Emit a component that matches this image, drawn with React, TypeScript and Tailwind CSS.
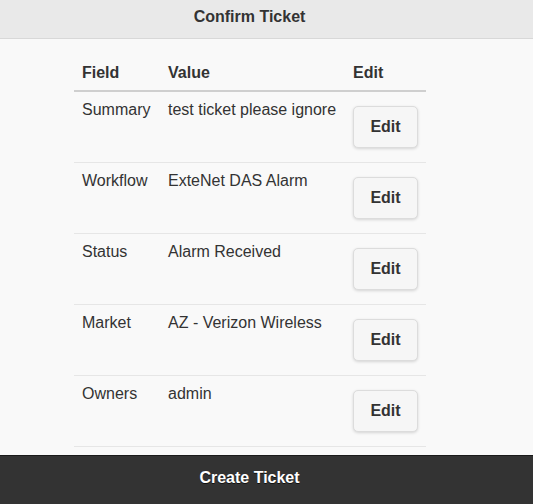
import React from "react";

const rows = [
  ["Summary", "test ticket please ignore"],
  ["Workflow", "ExteNet DAS Alarm"],
  ["Status", "Alarm Received"],
  ["Market", "AZ - Verizon Wireless"],
  ["Owners", "admin"],
];

export default function App() {
  return (
    <div className="w-[533px] h-[504px] bg-[#f9f9f9] text-[#333] text-[16px] flex flex-col overflow-hidden" style={{ fontFamily: '"Liberation Sans", Arial, sans-serif' }}>
      <div className="h-[39px] bg-[#e9e9e9] border-b border-[#d8d8d8] flex items-center justify-center font-bold text-[16px] text-[#333] shrink-0 pb-[4px] pr-[34px]">
        Confirm Ticket
      </div>
      <div className="mt-[15px] mx-[74px] w-[352px] shrink-0">
        <div className="flex h-[38px] border-b-2 border-[#cfcfcf] font-bold leading-[20px] pt-[9px]">
          <div className="w-[86px] pl-[8px]">Field</div>
          <div className="w-[185px] pl-[8px]">Value</div>
          <div className="pl-[8px]">Edit</div>
        </div>
        {rows.map(([f, v]) => (
          <div key={f} className="flex h-[71px] border-b border-[#e6e6e6] leading-[20px]">
            <div className="w-[86px] pl-[8px] pt-[8px]">{f}</div>
            <div className="w-[185px] pl-[8px] pt-[8px]">{v}</div>
            <div className="pl-[8px] pt-[14px]">
              <button className="w-[65px] h-[42px] rounded-[5px] border border-[#dcdcdc] bg-[#f6f6f6] shadow-[0_1px_3px_rgba(0,0,0,0.15)] font-bold text-[16px] text-[#333]">
                Edit
              </button>
            </div>
          </div>
        ))}
      </div>
      <div className="mt-[8px] h-[49px] bg-[#333] border-t border-[#1a1a1a] flex items-start justify-center pt-[10px] pr-[34px] text-white font-bold text-[16px] shrink-0" style={{ textShadow: "0 1px 0 #111" }}>
        Create Ticket
      </div>
    </div>
  );
}
